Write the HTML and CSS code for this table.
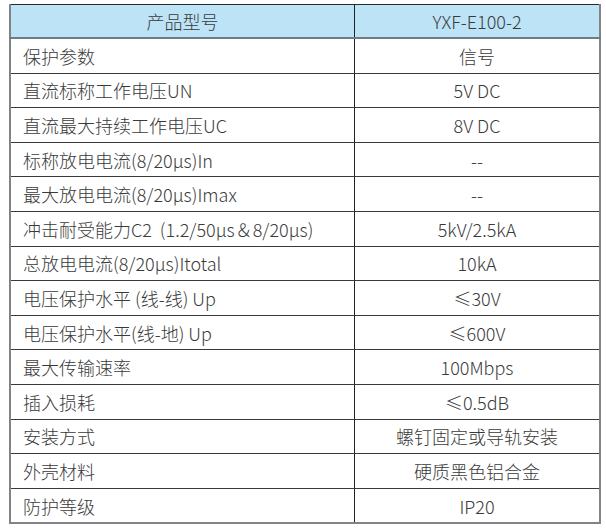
FILE: index.html
```html
<!DOCTYPE html>
<html lang="zh">
<head>
<meta charset="utf-8">
<link rel="stylesheet" href="styles.css">
</head>
<body>
<table class="spec">
  <thead>
    <tr><th class="c1">产品型号</th><th class="c2">YXF-E100-2</th></tr>
  </thead>
  <tbody>
    <tr><td class="c1">保护参数</td><td class="c2">信号</td></tr>
    <tr><td class="c1">直流标称工作电压UN</td><td class="c2">5V DC</td></tr>
    <tr><td class="c1">直流最大持续工作电压UC</td><td class="c2">8V DC</td></tr>
    <tr><td class="c1">标称放电电流(8/20μs)In</td><td class="c2">--</td></tr>
    <tr><td class="c1">最大放电电流(8/20μs)Imax</td><td class="c2">--</td></tr>
    <tr><td class="c1">冲击耐受能力C2&nbsp;&nbsp;(1.2/50μs＆8/20μs)</td><td class="c2">5kV/2.5kA</td></tr>
    <tr><td class="c1">总放电电流(8/20μs)Itotal</td><td class="c2">10kA</td></tr>
    <tr><td class="c1">电压保护水平 (线-线) Up</td><td class="c2">≤30V</td></tr>
    <tr><td class="c1">电压保护水平(线-地) Up</td><td class="c2">≤600V</td></tr>
    <tr><td class="c1">最大传输速率</td><td class="c2">100Mbps</td></tr>
    <tr><td class="c1">插入损耗</td><td class="c2">≤0.5dB</td></tr>
    <tr><td class="c1">安装方式</td><td class="c2">螺钉固定或导轨安装</td></tr>
    <tr><td class="c1">外壳材料</td><td class="c2">硬质黑色铝合金</td></tr>
    <tr><td class="c1">防护等级</td><td class="c2">IP20</td></tr>
  </tbody>
</table>
</body>
</html>
```
FILE: styles.css
```css
html, body {
  margin: 0;
  padding: 0;
  background: #ffffff;
}
body {
  padding: 4px 0 0 9px;
  font-family: "Noto Sans CJK SC", "Noto Sans", sans-serif;
  color: #3a3a3a;
}
.spec {
  border-collapse: collapse;
  width: 592px;
  table-layout: fixed;
  border-top: 1px solid #2a2a2a;
  border-left: 2px solid #808488;
  border-right: 2px solid #808488;
  border-bottom: 2px solid #808488;
}
.spec th, .spec td {
  height: 33.6px;
  padding: 0;
  font-size: 18px;
  font-weight: 300;
  line-height: 20px;
  border-bottom: 1px solid #3a3a3a;
}
.spec thead th {
  background: #bde3f7;
  border-bottom: 2px solid #6e7c86;
  height: 32px;
}
.spec .c1 {
  width: 343px;
  text-align: left;
  padding-left: 12px;
  border-right: 1px solid #222222;
}
.spec thead .c1 {
  text-align: center;
  padding-left: 0;
}
.spec .c2 {
  text-align: center;
}
```
